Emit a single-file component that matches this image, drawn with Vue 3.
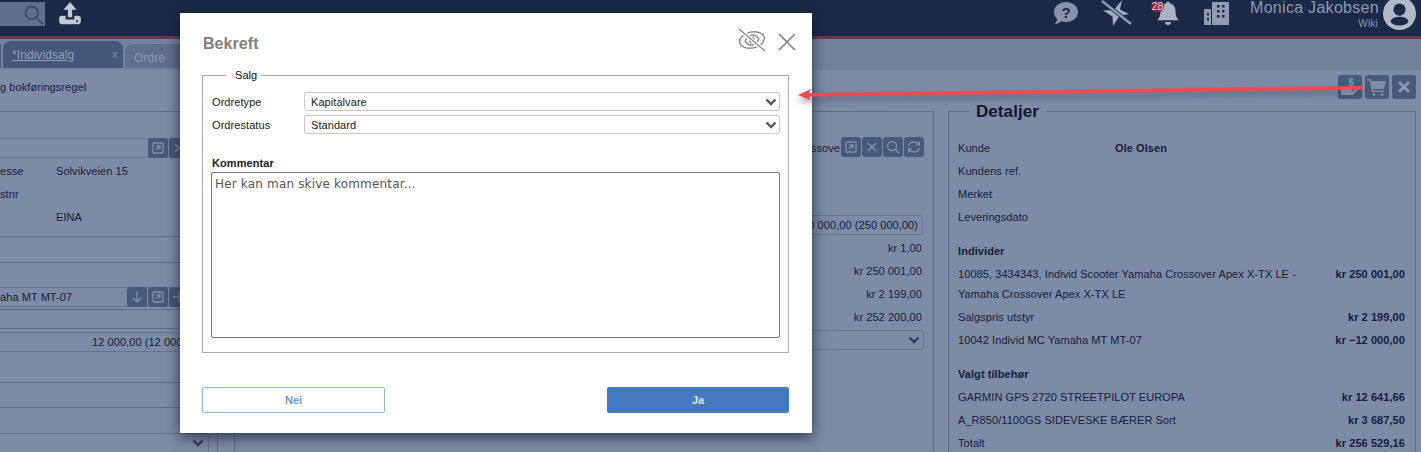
<script setup>
const personRows = [
  { label: 'esse', value: 'Solvikveien 15' },
  { label: 'stnr', value: '' },
  { label: '', value: 'EINA' }
]
const totals = ['kr 1,00', 'kr 250 001,00', 'kr 2 199,00', 'kr 252 200,00']
const customer = ['Kundens ref.', 'Merket', 'Leveringsdato']
const accessories = [
  { label: 'GARMIN GPS 2720 STREETPILOT EUROPA', value: 'kr 12 641,66' },
  { label: 'A_R850/1100GS SIDEVESKE BÆRER Sort', value: 'kr 3 687,50' },
  { label: 'Totalt', value: 'kr 256 529,16' }
]
</script>

<template>
  <div class="page">
    <header class="top">
      <div class="search">
        <svg class="search-icon" viewBox="0 0 20 20"><circle cx="8.500" cy="8.500" r="6" /><path d="M13 13l6 6" /></svg>
      </div>
      <svg class="upload" viewBox="0 0 24 24"><path d="M12 1l6 7h-4v7h-4V8H6z" /><path d="M2 16c0-1.500 1-2.500 2.500-2.500H8v3.500h8v-3.500h3.500c1.500 0 2.500 1 2.500 2.500v3c0 1.500-1 2.500-2.500 2.500h-15C3 21.500 2 20.500 2 19z" /><circle cx="18.500" cy="18.500" r="1" fill="#1a2a47" /></svg>
      <div class="top-right">
        <svg class="ic-help" viewBox="0 0 26 24">
          <path d="M13 1c6.600 0 12 4.300 12 10s-5.400 10-12 10c-1.700 0-3.300-.3-4.700-.8C6.800 21.800 4.500 23 1.600 23c1.300-1.300 2.300-3 2.500-5C2.200 16.100 1 13.700 1 11 1 5.300 6.400 1 13 1z" />
          <text x="13" y="17" class="help-q">?</text>
        </svg>
        <svg class="ic-star" viewBox="0 0 31 26">
          <path d="M21 0l-2 9.500L28 14l-9.500 2L12 26l-.5-9.500L2 10.500l11-.5z" />
          <path class="slash-gap" d="M1 1l29 23" />
          <path class="slash" d="M1 1l29 23" />
        </svg>
        <div class="bell-wrap">
          <svg class="ic-bell" viewBox="0 0 24 26">
            <path d="M12 1.500c1 0 1.800.8 1.800 1.800 3.500.8 5.700 3.800 5.700 7.500 0 5 1 7 3.500 9.500H1c2.500-2.500 3.500-4.500 3.500-9.500 0-3.700 2.200-6.700 5.700-7.500 0-1 .8-1.800 1.800-1.800z" />
            <path d="M9 22h6c0 1.700-1.300 3-3 3s-3-1.300-3-3z" />
          </svg>
          <span class="badge">28</span>
        </div>
        <svg class="ic-build" viewBox="0 0 25 24">
          <path d="M7 24V8H0v16zM8 24V1h17v23z" />
          <g class="holes"><path d="M3 12h2v2.500H3zM3 17h2v2.500H3zM13 4h2.500v2.500H13zM18 4h2.500v2.500H18zM13 9h2.500v2.500H13zM18 9h2.500v2.500H18zM13 14h2.500v2.500H13zM18 14h2.500v2.500H18z" /></g>
        </svg>
        <div class="user">
          <div class="user-name">Monica Jakobsen</div>
          <div class="user-org">Wiki</div>
        </div>
        <svg class="ic-user" viewBox="0 0 30 30">
          <circle cx="15" cy="15" r="15" />
          <circle class="hole" cx="15" cy="11.500" r="5.500" />
          <ellipse class="hole" cx="15" cy="22" rx="8" ry="4" />
        </svg>
      </div>
    </header>

    <nav class="tabs">
      <div class="tab tab-stub"></div>
      <div class="tab tab-active"><span class="tab-link">*Individsalg</span><span class="tab-x">x</span></div>
      <div class="tab tab-other">Ordre</div>
    </nav>

    <main class="content">
      <div class="intro">
        <span>g bokføringsregel</span>
        <div class="actions">
          <button class="sq">
            <svg viewBox="0 0 20 20"><text x="11" y="8.500" class="dollar">$</text><path class="hand" d="M1 13c2-1.500 4-1.500 6-.8h4c1.200 0 1.200 1.800 0 1.800H8h5l4.500-2.800c1.200-.4 1.500.8.500 1.800l-5 5H1z" /></svg>
          </button>
          <button class="sq">
            <svg viewBox="0 0 20 20"><path d="M0 2h3.500l.7 2H19l-2 8H6.200l.4 1.500H17V15H5.200L2.400 3.500H0z" /><circle cx="7" cy="17.500" r="1.600" /><circle cx="15" cy="17.500" r="1.600" /></svg>
          </button>
          <button class="sq">
            <svg viewBox="0 0 20 20"><path class="x" d="M5 5l10 10M15 5L5 15" /></svg>
          </button>
        </div>
      </div>

      <div class="columns">
        <div class="left-wrap">
          <section class="left">
            <div class="blank b26"></div>
            <div class="field">
              <div class="field-text w147"></div>
              <button class="sm"><svg viewBox="0 0 16 16"><rect class="stroke" x="3" y="3" width="10" height="10" rx="1" /><path class="stroke" d="M6 10l4-4M6.500 6H10v3.500" /></svg></button>
              <button class="sm"><svg viewBox="0 0 16 16"><path class="x2" d="M4 4l8 8M12 4l-8 8" /></svg></button>
            </div>
            <div class="people">
              <div v-for="(row, i) in personRows" :key="i" class="person">
                <span class="person-l">{{ row.label }}</span><span>{{ row.value }}</span>
              </div>
            </div>
            <div class="blank b26 ruled"></div>
            <div class="blank b24"></div>
            <div class="field">
              <div class="field-text w126">aha MT MT-07</div>
              <button class="sm"><svg viewBox="0 0 16 16"><path class="stroke" d="M8 2v11M3.500 8.500L8 13l4.500-4.500" /></svg></button>
              <button class="sm"><svg viewBox="0 0 16 16"><rect class="stroke" x="3" y="3" width="10" height="10" rx="1" /><path class="stroke" d="M6 10l4-4M6.500 6H10v3.500" /></svg></button>
              <button class="sm"><svg viewBox="0 0 16 16"><path class="stroke" d="M8 2v12M2 8h12" /></svg></button>
            </div>
            <div class="blank b3 ruled"></div>
            <div class="blank b19 ruled"></div>
            <div class="field field-gap">
              <div class="field-text field-right">12 000,00 (12 000,00)</div>
            </div>
            <div class="blank b31 ruled"></div>
            <div class="blank b25 ruled"></div>
            <div class="blank b25"></div>
            <div class="select-stub">
              <svg class="chev dim" viewBox="0 0 12 8"><path d="M1.500 1.500L6 6l4.500-4.500" /></svg>
            </div>
          </section>
        </div>

        <fieldset class="center">
          <div class="blank b26"></div>
          <div class="center-row">
            <span class="center-text">Yamaha Crossove</span>
            <button class="sm"><svg viewBox="0 0 16 16"><rect class="stroke" x="3" y="3" width="10" height="10" rx="1" /><path class="stroke" d="M6 10l4-4M6.500 6H10v3.500" /></svg></button>
            <button class="sm"><svg viewBox="0 0 16 16"><path class="x2" d="M4 4l8 8M12 4l-8 8" /></svg></button>
            <button class="sm"><svg viewBox="0 0 16 16"><circle class="stroke" cx="7" cy="7" r="4.500" /><path class="stroke" d="M10.500 10.500L14 14" /></svg></button>
            <button class="sm"><svg viewBox="0 0 16 16"><path class="stroke" d="M2.500 7C3 4.500 5 3 8 3c2 0 3.500 1 4 2M13.500 9c-.5 2.500-2.500 4-5.500 4-2 0-3.500-1-4-2" /><path class="fill" d="M14 2v4.500H9.500zM2 14V9.500h4.500z" /></svg></button>
          </div>
          <div class="price-input">250 000,00 (250 000,00)</div>
          <div class="totals">
            <div v-for="t in totals" :key="t" class="total">{{ t }}</div>
          </div>
          <div class="center-select">
            <svg class="chev dim" viewBox="0 0 12 8"><path d="M1.500 1.500L6 6l4.500-4.500" /></svg>
          </div>
        </fieldset>

        <fieldset class="details">
          <legend>Detaljer</legend>
          <div class="d-row d-first"><span class="d-key">Kunde</span><b>Ole Olsen</b></div>
          <div v-for="c in customer" :key="c" class="d-row"><span>{{ c }}</span></div>
          <div class="d-head">Individer</div>
          <div class="d-row d-multi">
            <span class="d-long">10085, 3434343, Individ Scooter Yamaha Crossover Apex X-TX LE - Yamaha Crossover Apex X-TX LE</span>
            <b>kr 250 001,00</b>
          </div>
          <div class="d-row d-between"><span>Salgspris utstyr</span><b>kr 2 199,00</b></div>
          <div class="d-row d-between"><span>10042 Individ MC Yamaha MT MT-07</span><b>kr −12 000,00</b></div>
          <div class="d-head">Valgt tilbehør</div>
          <div v-for="a in accessories" :key="a.label" class="d-row d-between"><span>{{ a.label }}</span><b>{{ a.value }}</b></div>
        </fieldset>
      </div>
    </main>

    <div class="modal">
      <div class="modal-head">
        <h2>Bekreft</h2>
        <svg class="ic-eye" viewBox="0 0 28 24">
          <g transform="rotate(-12 14 12)">
            <ellipse cx="14" cy="12" rx="12.500" ry="8" />
            <path d="M7 12c1.500-3 4-5 7-5s5.500 2 7 5c-1.500 3-4 5-7 5s-5.500-2-7-5z" />
            <circle cx="14" cy="12" r="2.500" />
          </g>
          <path class="eye-gap" d="M1 1l26 22" />
          <path d="M1 1l26 22" />
        </svg>
        <svg class="ic-close" viewBox="0 0 18 18"><path d="M1 1l16 16M17 1L1 17" /></svg>
      </div>
      <fieldset class="sale">
        <legend>Salg</legend>
        <div class="m-row m-first">
          <label>Ordretype</label>
          <div class="m-select">Kapitalvare<svg class="chev" viewBox="0 0 12 8"><path d="M1.500 1.500L6 6l4.500-4.500" /></svg></div>
        </div>
        <div class="m-row">
          <label>Ordrestatus</label>
          <div class="m-select">Standard<svg class="chev" viewBox="0 0 12 8"><path d="M1.500 1.500L6 6l4.500-4.500" /></svg></div>
        </div>
        <div class="c-label">Kommentar</div>
        <div class="c-area">Her kan man skive kommentar...</div>
      </fieldset>
      <div class="m-actions">
        <button class="no">Nei</button>
        <button class="yes">Ja</button>
      </div>
    </div>

    <svg class="arrow" viewBox="0 0 1421 452">
      <g class="arrow-group">
        <path class="arrow-line" d="M806 95L1363 87.700" />
        <path class="arrow-head" d="M798 95L811 89L808 95L811 100.500z" />
      </g>
    </svg>
  </div>
</template>

<style>
html, body { margin: 0; background: #7d8ca6; }
</style>

<style scoped>
.page { position: relative; width: 1421px; height: 452px; overflow: hidden; background: #7d8ca6; color: #14203a; font: 11px "Liberation Sans", Arial, sans-serif; letter-spacing: .07px; }
svg { display: block; }

.top { display: flex; align-items: flex-start; height: 36px; background: #1a2a47; border-bottom: 3px solid #72344f; }
.search { width: 45px; height: 24px; margin-top: 2px; background: #5f708c; display: flex; justify-content: flex-end; align-items: center; padding-right: 1px; box-sizing: border-box; }
.search-icon { width: 21px; height: 21px; fill: none; stroke: #3f4f6b; stroke-width: 2; }
.upload { width: 26px; height: 26px; margin: 1px 0 0 12px; fill: #c2cad6; }
.top-right { margin-left: auto; display: flex; align-items: flex-start; padding-right: 5px; }
.ic-help { width: 26px; height: 24px; margin-top: 1px; fill: #8593ab; }
.help-q { font: bold 15px "Liberation Sans", sans-serif; fill: #1a2a47; text-anchor: middle; }
.ic-star { width: 31px; height: 26px; margin-left: 22px; fill: #a0abbf; }
.slash { stroke: #8f9cb2; stroke-width: 2.400; fill: none; }
.slash-gap { stroke: #1a2a47; stroke-width: 4; fill: none; }
.bell-wrap { position: relative; width: 26px; height: 26px; margin-left: 21px; }
.ic-bell { position: absolute; left: 3px; top: 0; width: 24px; height: 26px; fill: #a8b2c4; }
.badge { position: absolute; left: -2px; top: 1px; width: 13px; height: 11px; background: #9c1c46; border-radius: 6px; color: #d7dce5; font-size: 10.500px; line-height: 11px; text-align: center; letter-spacing: 0; }
.ic-build { width: 25px; height: 24px; margin: 1px 0 0 25px; fill: #8f9cb2; }
.holes path { fill: #1a2a47; }
.user { width: 128px; margin: -2px 0 0 21px; text-align: right; color: #8c99b0; }
.user-name { font: 16px/20px "Liberation Sans", sans-serif; letter-spacing: .3px; white-space: nowrap; }
.user-org { font: 10px/12px "Liberation Sans", sans-serif; letter-spacing: .2px; }
.ic-user { width: 33px; height: 33px; margin: -3px 0 0 5px; fill: #b0b9c9; }
.hole { fill: #1a2a47; }

.tabs { display: flex; align-items: flex-end; gap: 2px; height: 31px; background: #74839b; padding-bottom: 2px; box-sizing: border-box; }
.tab { border-radius: 8px 8px 0 0; box-sizing: border-box; }
.tab-stub { width: 1px; height: 24px; background: #4a5b7a; border-radius: 0; }
.tab-active { width: 120px; height: 27px; background: #45577a; padding: 7px 0 0 9px; color: #93a0b8; font-size: 12px; display: flex; justify-content: space-between; }
.tab-link { text-decoration: underline; }
.tab-x { font-size: 11px; color: #6d7c96; margin-right: 5px; font-weight: bold; }
.tab-other { width: 60px; height: 24px; background: #5f6f8d; padding: 7px 0 0 9px; color: #8a97af; font-size: 12px; }

.content { height: 382px; }
.intro { display: flex; justify-content: space-between; height: 32px; }
.intro > span { margin-top: 11px; }
.actions { display: flex; gap: 3px; margin: 5px 5px 0 0; }
.sq { width: 24px; height: 24px; padding: 2px; border: 0; border-radius: 3px; background: #485a79; fill: #7e8ca5; box-sizing: border-box; }
.sq svg { width: 20px; height: 20px; }
.dollar { font: bold 10px "Liberation Sans", sans-serif; text-anchor: middle; fill: #8794ac; }
.hand { fill: #8f9cb2; }
.stroke { fill: none; stroke: #8390a8; stroke-width: 1.300; }
.fill { fill: #8390a8; }
.x { fill: none; stroke: #8b98ae; stroke-width: 3; }
.x2 { fill: none; stroke: #8390a8; stroke-width: 1.600; }

.columns { display: flex; align-items: flex-start; }
.left-wrap { width: 218px; height: 360px; margin-top: 9px; border-right: 1px solid #5f6e88; box-sizing: border-box; }
.left { width: 209px; height: 360px; border-top: 1px solid #5f6e88; box-sizing: border-box; overflow: hidden; }
.blank { box-sizing: border-box; }
.ruled { border-bottom: 1px solid #5f6e88; }
.b3 { height: 3px; }
.b19 { height: 19px; }
.b24 { height: 24px; }
.b25 { height: 25px; }
.b26 { height: 26px; }
.b31 { height: 31px; }
.field { display: flex; height: 20px; gap: 1px; border-top: 1px solid #65748e; border-bottom: 1px solid #65748e; box-sizing: border-box; }
.field-gap { margin-top: 3px; }
.field-text { flex: 1; line-height: 18px; min-width: 0; }
.field-text.w147 { flex: none; width: 147px; }
.field-text.w126 { flex: none; width: 126px; }
.field-right { padding-left: 92px; white-space: nowrap; }
.sm { flex: none; width: 20px; height: 20px; margin-top: -1px; padding: 2px; border: 0; border-radius: 3px; background: #485a79; box-sizing: border-box; }
.sm svg { width: 16px; height: 16px; }
.people { height: 79px; padding-top: 2px; box-sizing: border-box; border-bottom: 1px solid #5f6e88; }
.person { display: flex; height: 23px; line-height: 23px; }
.person-l { width: 56px; }
.select-stub { height: 20px; border: 1px solid #65748e; border-left: 0; box-sizing: border-box; display: flex; justify-content: flex-end; align-items: center; padding-right: 4px; border-radius: 0 3px 3px 0; }
.chev { width: 12px; height: 8px; fill: none; stroke: #555; stroke-width: 2.400; }
.chev.dim { stroke: #2f3e5a; }

.center, .details { margin: 0; padding: 0; min-width: 0; box-sizing: border-box; border: 1px solid #5f6e88; }
.center { width: 700px; height: 360px; margin-top: 9px; margin-left: 16px; padding-right: 9px; }
.center-row { display: flex; justify-content: flex-end; gap: 1px; height: 20px; }
.center-text { line-height: 20px; }
.price-input { margin-top: 57px; height: 20px; margin-left: 530px; margin-right: 1px; border: 1px solid #66758f; border-radius: 3px; text-align: right; line-height: 18px; padding-right: 4px; box-sizing: border-box; }
.totals { margin-top: 2px; }
.total { height: 23px; line-height: 23px; text-align: right; padding-right: 2px; }
.center-select { height: 20px; margin-top: 1px; border: 1px solid #66758f; border-radius: 3px; display: flex; justify-content: flex-end; align-items: center; padding-right: 3px; box-sizing: border-box; }

.details { width: 468px; height: 361px; margin-top: -1px; margin-left: 14px; padding: 0 10px 0 9px; }
.details legend { margin-left: 11px; padding: 2px 7px 0; font: bold 17px/18px "Liberation Sans", sans-serif; color: #0f1a30; }
.d-row { min-height: 23px; line-height: 23px; }
.d-first { margin-top: 16px; }
.d-key { display: inline-block; width: 157px; }
.d-between { display: flex; justify-content: space-between; }
.d-multi { display: flex; justify-content: space-between; line-height: 20px; padding-top: 1px; margin-bottom: 2px; }
.d-long { width: 350px; }
.d-head { font-weight: bold; height: 23px; line-height: 23px; margin-top: 11px; }

.modal { position: absolute; left: 180px; top: 13px; width: 632px; height: 420px; box-sizing: border-box; padding: 0 23px 0 22px; background: #fff; box-shadow: 0 4px 14px rgba(15, 22, 40, .75); color: #222; }
.modal-head { display: flex; align-items: flex-start; height: 62px; }
.modal-head h2 { margin: 22px 0 0 1px; font: bold 16px/18px "Liberation Sans", sans-serif; color: #808080; }
.ic-eye { width: 28px; height: 24px; margin: 15px 0 0 auto; fill: none; stroke: #8a8a8a; stroke-width: 1.400; }
.eye-gap { stroke: #fff; stroke-width: 4; }
.ic-close { width: 18px; height: 18px; margin: 20px -7px 0 12px; fill: none; stroke: #808080; stroke-width: 1.600; }
.sale { margin: -9px 0 0; padding: 0 8px 0 9px; height: 287px; box-sizing: border-box; border: 1px solid #aaa; min-width: 0; }
.sale legend { margin-left: 14px; padding: 0 4px 0 9px; font: 11px/18px "Liberation Sans", sans-serif; height: 18px; color: #111; }
.m-row { display: flex; align-items: center; height: 19px; margin-bottom: 4px; }
.m-first { margin-top: 8px; }
.m-row label { width: 92px; }
.m-select { flex: 1; height: 19px; border: 1px solid #c8c8c8; border-radius: 3px; padding-left: 6px; line-height: 18px; box-sizing: border-box; display: flex; justify-content: space-between; align-items: center; }
.m-select .chev { margin-right: 2px; }
.c-label { margin-top: 22px; font-weight: bold; line-height: 14px; }
.c-area { margin: 2px 0 0 -1px; height: 166px; box-sizing: border-box; border: 1px solid #767676; border-radius: 2px; padding: 3px 3px; font: 12px/16px "DejaVu Sans", sans-serif; letter-spacing: .17px; color: #555; }
.m-actions { display: flex; justify-content: space-between; margin-top: 34px; }
.m-actions button { height: 26px; border-radius: 2px; font: bold 11px "Liberation Sans", sans-serif; box-sizing: border-box; }
.m-actions .no { width: 183px; background: #fff; border: 1px solid #8fb5e8; color: #6f97cf; }
.m-actions .yes { width: 182px; background: #4678bd; border: 0; color: #dfe7f3; }

.arrow { position: absolute; left: 0; top: 0; width: 1421px; height: 452px; fill: none; pointer-events: none; }
.arrow-group { filter: drop-shadow(0 4px 3px rgba(25, 35, 55, .4)); }
.arrow-line { stroke: #f4474e; stroke-width: 3.500; }
.arrow-head { fill: #f4474e; }
</style>
